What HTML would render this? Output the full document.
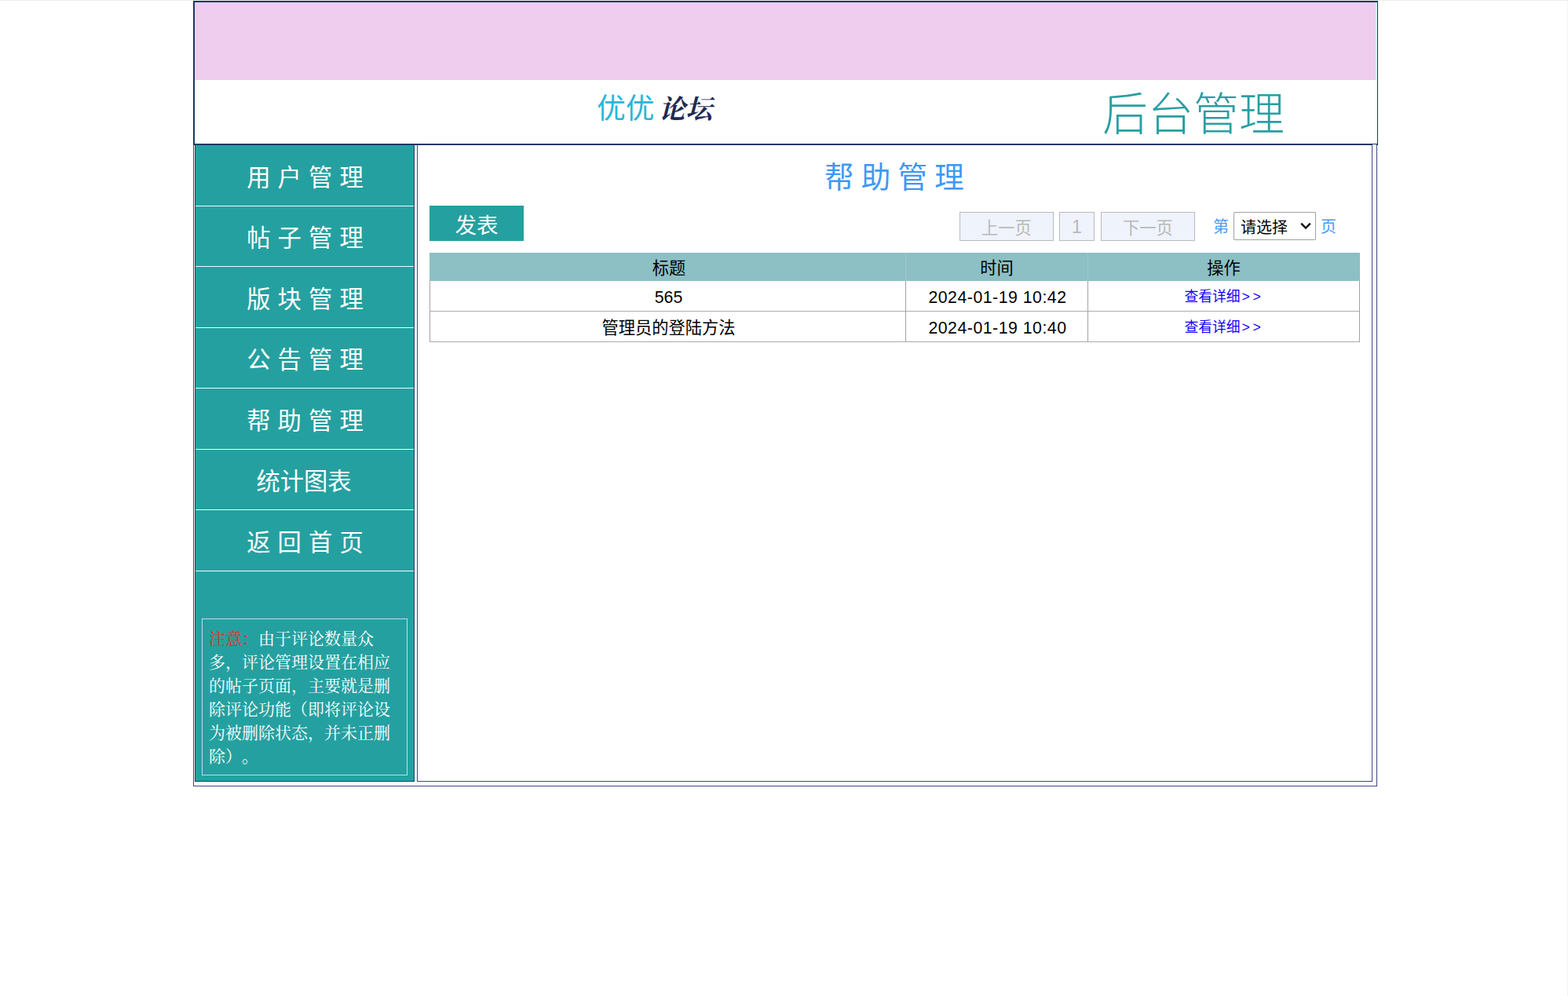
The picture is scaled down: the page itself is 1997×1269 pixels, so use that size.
<!DOCTYPE html>
<html lang="zh-CN">
<head>
<meta charset="utf-8">
<title>后台管理 - 帮助管理</title>
<style>
*{box-sizing:border-box;margin:0;padding:0}
html,body{width:1997px;height:1269px;overflow:hidden;background:#fff}
body{position:relative;font-family:"Liberation Sans","Noto Sans CJK SC",sans-serif;color:#000}
.abs{position:absolute}
#edge-top{left:0;top:0;width:1997px;height:1px;background:#ececec}
#edge-right{left:1996px;top:0;width:1px;height:1269px;background:#f4f4f4}
/* outer wrapper */
#wrap{left:246px;top:1px;width:1508px;height:1001px;border:1px solid #3e4688;background:#fff}
/* header */
#header{left:246px;top:1px;width:1509px;height:184px;background:#fff;border:2px solid #1b3768;border-right-width:1px}
#pink{left:248px;top:3px;width:1504px;height:99px;background:#eecdee}
/* sidebar */
#side{left:248px;top:185px;width:280px;height:811px;background:#25a0a0;border:1px solid #1e3c6c;border-top:0}
.mi{left:252px;width:282px;height:77px;color:#fff;font-size:30.3px;letter-spacing:9.1px;text-align:center;line-height:84px;white-space:nowrap;text-decoration:none}
.ml{left:249px;width:278px;height:1px;background:#f4fbfb}
#note{left:257px;top:788px;width:262px;height:200px;border:1px solid #bfdcec}
#notetext{left:266px;top:799px;width:250px;font-family:"Liberation Serif","Noto Serif CJK SC",serif;font-size:21px;line-height:30.1px;color:#fff;white-space:nowrap;text-spacing-trim:space-all;font-kerning:none;font-feature-settings:"chws" 0,"halt" 0,"kern" 0}
#notetext b{font-weight:normal;color:#ff1e1e}
/* main */
#main{left:531px;top:185px;width:1217px;height:811px;background:#fff;border:1px solid #3b468f;border-top:0}
#title{left:535px;top:201px;width:1217px;text-align:center;font-size:37.5px;letter-spacing:9.3px;color:#4098f5;line-height:50px;white-space:nowrap}
#post{left:547px;top:262px;width:120px;height:45px;background:#25a0a0;color:#fff;font-size:27.5px;line-height:51px;text-align:center;text-decoration:none}
.pb{top:270px;height:37px;background:#eff3fb;border:1px solid #b9b9c3;color:#b8b8b8;font-size:21.25px;line-height:40px;text-align:center}
.blue{color:#4a9cf3;font-size:20px;line-height:24px}
#sel{left:1571px;top:270px;width:105px;height:36px;border:1px solid #a2a2a6;border-radius:1px;background:#fff;font-size:20px;line-height:38px;padding-left:8px;color:#000}
#chev{left:1655px;top:282px}
/* table */
#thead{left:547px;top:322px;width:1185px;height:36px;background:#8cc0c4}
.vl{width:1px;background:#a2a2a2}
.hl{height:1px;background:#acacac}
.cell{height:38px;line-height:43px;text-align:center;font-size:21.25px;white-space:nowrap}
.th{top:322px;height:35px;line-height:40px;text-align:center;font-size:21.25px}
.lk{color:#1400ff;font-size:17.75px;text-decoration:none;position:relative;top:-2px;left:0.5px}
.dt{letter-spacing:.52px;padding-left:2px}
.c1{padding-left:3px}
.lk i{font-style:normal;letter-spacing:3.6px;margin-left:2px}
</style>
</head>
<body>
<div class="abs" id="edge-top"></div>
<div class="abs" id="edge-right"></div>
<div class="abs" id="wrap"></div>

<div class="abs" id="header"></div>
<div class="abs" id="pink"></div>
<div class="abs" style="left:1752px;top:3px;width:2px;height:99px;background:#d6fbfb"></div>
<svg class="abs" id="logos" style="left:0;top:0" width="1997" height="185" viewBox="0 0 1997 185" role="img" aria-label="优优论坛 后台管理"><text x="760" y="151" font-size="36.8" fill="#2bb6d8" font-family="'Liberation Sans','Noto Sans CJK SC',sans-serif">优优</text>
<text x="839" y="151" font-size="34" font-weight="bold" font-style="italic" fill="#1f2b52" font-family="'Liberation Serif','Noto Serif CJK SC',serif">论坛</text>
<text x="1404" y="166" font-size="58" font-weight="300" fill="#2a9fa2" font-family="'Liberation Sans','Noto Sans CJK SC',sans-serif">后台管理</text></svg>

<div class="abs" style="left:1748px;top:184px;width:5px;height:1px;background:#fff"></div>
<div class="abs" id="side"></div>
<a class="abs mi" style="top:185px">用户管理</a>
<div class="abs ml" style="top:262px"></div>
<a class="abs mi" style="top:262px">帖子管理</a>
<div class="abs ml" style="top:339px"></div>
<a class="abs mi" style="top:340px">版块管理</a>
<div class="abs ml" style="top:417px"></div>
<a class="abs mi" style="top:417px">公告管理</a>
<div class="abs ml" style="top:494px"></div>
<a class="abs mi" style="top:495px">帮助管理</a>
<div class="abs ml" style="top:572px"></div>
<a class="abs mi" style="top:572px;letter-spacing:0;left:246px">统计图表</a>
<div class="abs ml" style="top:649px"></div>
<a class="abs mi" style="top:650px">返回首页</a>
<div class="abs ml" style="top:727px"></div>
<div class="abs" id="note"></div>
<div class="abs" id="notetext"><b>注意：</b>由于评论数量众<br>多，评论管理设置在相应<br>的帖子页面，主要就是删<br>除评论功能（即将评论设<br>为被删除状态，并未正删<br>除）。</div>

<div class="abs" id="main"></div>
<div class="abs" id="title">帮助管理</div>
<a class="abs" id="post">发表</a>
<div class="abs pb" style="left:1222px;width:120px">上一页</div>
<div class="abs pb" style="left:1349px;width:45px;font-size:23px;line-height:36px">1</div>
<div class="abs pb" style="left:1402px;width:120px">下一页</div>
<div class="abs blue" style="left:1545px;top:277px">第</div>
<div class="abs" id="sel">请选择</div>
<svg class="abs" id="chev" width="16" height="12" viewBox="0 0 16 12"><path d="M2.2 2.6 L8 8.6 L13.8 2.6" fill="none" stroke="#111" stroke-width="2.4" stroke-linecap="butt" stroke-linejoin="miter"/></svg>
<div class="abs blue" style="left:1682px;top:277px">页</div>

<div class="abs" id="thead"></div>
<div class="abs th" style="left:549px;width:606px">标题</div>
<div class="abs th" style="left:1154px;width:231px">时间</div>
<div class="abs th" style="left:1386px;width:345px">操作</div>
<div class="abs cell c1" style="left:547px;width:606px;top:358px">565</div>
<div class="abs cell dt" style="left:1154px;width:231px;top:358px">2024-01-19 10:42</div>
<div class="abs cell" style="left:1386px;width:345px;top:358px"><a class="lk">查看详细<i>&gt;&gt;</i></a></div>
<div class="abs cell c1" style="left:547px;width:606px;top:397px">管理员的登陆方法</div>
<div class="abs cell dt" style="left:1154px;width:231px;top:397px">2024-01-19 10:40</div>
<div class="abs cell" style="left:1386px;width:345px;top:397px"><a class="lk">查看详细<i>&gt;&gt;</i></a></div>
<div class="abs hl" style="left:547px;width:1185px;top:396px"></div>
<div class="abs hl" style="left:547px;width:1185px;top:435px"></div>
<div class="abs vl" style="left:547px;top:358px;height:78px"></div>
<div class="abs vl" style="left:1153px;top:322px;height:36px;background:#a5c4ca"></div>
<div class="abs vl" style="left:1153px;top:358px;height:78px"></div>
<div class="abs vl" style="left:1385px;top:322px;height:36px;background:#a5c4ca"></div>
<div class="abs vl" style="left:1385px;top:358px;height:78px"></div>
<div class="abs vl" style="left:1731px;top:358px;height:78px"></div>
</body>
</html>
